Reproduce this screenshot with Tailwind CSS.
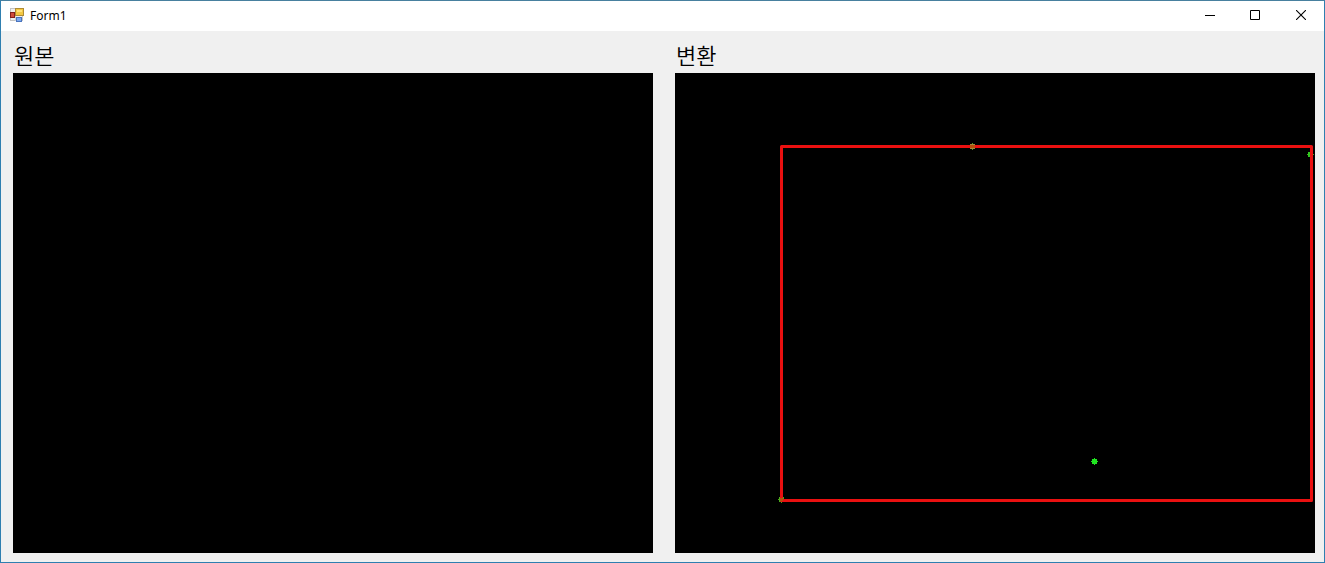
<!DOCTYPE html>
<html lang="ko">
<head>
<meta charset="utf-8">
<meta name="viewport" content="width=device-width, initial-scale=1">
<title>Form1</title>
<script src="https://cdn.jsdelivr.net/npm/@tailwindcss/browser@4"></script>
</head>
<body class="flex min-h-screen flex-col border border-[#2f7fb0] border-t-[#47809f] bg-[#f0f0f0] font-['Noto_Sans','Noto_Sans_CJK_KR',sans-serif] text-black">
  <header class="flex h-[30px] items-center bg-white pl-2">
    <svg class="size-4 shrink-0" viewBox="0 0 16 16" aria-hidden="true" shape-rendering="crispEdges">
      <rect x="1" y="0" width="13" height="13" fill="#c4c4c4"/>
      <rect x="2" y="1" width="11" height="11" fill="#efefef"/>
      <path d="M6.5 1v12M1 4.5h5M6 9.5h8" stroke="#cfcfcf"/>
      <rect x="6" y="0" width="9" height="8" fill="#b08c34"/>
      <rect x="7" y="1" width="7" height="6" fill="#f3c842"/>
      <rect x="8" y="2" width="5" height="2" fill="#ffe27c"/>
      <rect x="1" y="4" width="5" height="6" fill="#82201d"/>
      <rect x="2" y="5" width="3" height="4" fill="#cf4b3c"/>
      <rect x="7" y="9" width="6" height="5" fill="#4a74bd"/>
      <rect x="8" y="10" width="4" height="3" fill="#7eaaf0"/>
    </svg>
    <h1 class="ml-[5px] flex-1 text-xs leading-4">Form1</h1>
    <div class="flex self-stretch">
      <button type="button" aria-label="Minimize" class="flex w-11 items-center justify-center pb-0.5">
        <svg class="size-2.5" viewBox="0 0 10 10" stroke="#000" fill="none"><path d="M0 5.5h10"/></svg>
      </button>
      <button type="button" aria-label="Maximize" class="flex w-[46px] items-center justify-center pb-0.5">
        <svg class="size-2.5" viewBox="0 0 10 10" stroke="#000" fill="none"><path d="M.5 .5h9v9h-9z"/></svg>
      </button>
      <button type="button" aria-label="Close" class="flex w-[46px] items-center justify-center pb-0.5">
        <svg class="size-2.5" viewBox="0 0 10 10" stroke="#000" fill="none"><path d="M0 0l10 10M10 0l-10 10" stroke-width="1.1"/></svg>
      </button>
    </div>
  </header>
  <main class="grid grid-cols-2 gap-[22px] pt-2.5 pr-[9px] pb-2 pl-3">
    <section>
      <h2 class="h-8 pl-px font-['Noto_Sans_CJK_KR',sans-serif] text-[22px] leading-[26px] font-[350]">원본</h2>
      <svg class="block aspect-[4/3] w-full bg-black" viewBox="0 0 640 480" role="img" aria-label="원본"></svg>
    </section>
    <section>
      <h2 class="h-8 pl-px font-['Noto_Sans_CJK_KR',sans-serif] text-[22px] leading-[26px] font-[350]">변환</h2>
      <svg class="block aspect-[4/3] w-full bg-black" viewBox="0 0 640 480" role="img" aria-label="변환">
        <defs>
          <path id="point" d="M-.5-3.5h1v1h2v2h1v1h-1v2h-2v1h-1v-1h-2v-2h-1v-1h1v-2h2z"/>
        </defs>
        <g fill="#20e420">
          <use href="#point" x="419.5" y="388.5"/>
        </g>
        <g fill="#4cac1c">
          <use href="#point" x="297.5" y="73.5"/>
          <use href="#point" x="635.5" y="81.5"/>
          <use href="#point" x="106.5" y="426.5"/>
        </g>
        <path d="M633 79h2v5h-2z" fill="#30c820"/>
        <rect x="106.5" y="73.5" width="530" height="354" fill="none" stroke="#ea1010" stroke-width="3" stroke-linejoin="round"/>
        <path d="M295 73.5h5M105 426.5h3" stroke="#b8500c" stroke-width="3"/>
        <path d="M295 71.5h5M295 75.5h5" stroke="#a08840"/>
      </svg>
    </section>
  </main>
</body>
</html>
